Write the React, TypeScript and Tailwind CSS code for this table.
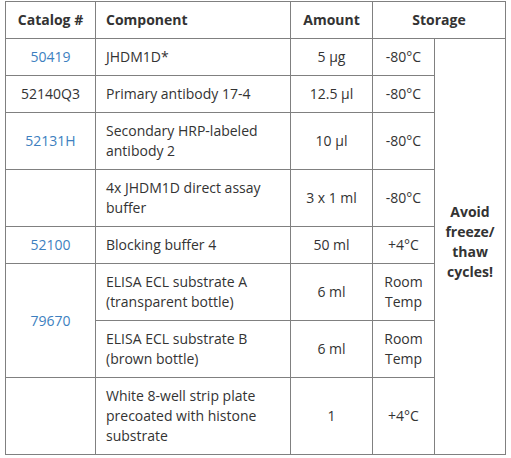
const link = "text-[#3d7fc0]";

type Row = {
  catalog?: string;
  isLink?: boolean;
  catalogSpan?: number;
  skipCatalog?: boolean;
  component: string;
  amount: string;
  storage: string;
};

const rows: Row[] = [
  { catalog: "50419", isLink: true, component: "JHDM1D*", amount: "5 µg", storage: "-80°C" },
  { catalog: "52140Q3", component: "Primary antibody 17-4", amount: "12.5 µl", storage: "-80°C" },
  { catalog: "52131H", isLink: true, component: "Secondary HRP-labeled antibody 2", amount: "10 µl", storage: "-80°C" },
  { catalog: "", component: "4x JHDM1D direct assay buffer", amount: "3 x 1 ml", storage: "-80°C" },
  { catalog: "52100", isLink: true, component: "Blocking buffer 4", amount: "50 ml", storage: "+4°C" },
  { catalog: "79670", isLink: true, catalogSpan: 2, component: "ELISA ECL substrate A (transparent bottle)", amount: "6 ml", storage: "Room Temp" },
  { skipCatalog: true, component: "ELISA ECL substrate B (brown bottle)", amount: "6 ml", storage: "Room Temp" },
  { catalog: "", component: "White 8-well strip plate precoated with histone substrate", amount: "1", storage: "+4°C" },
];

const cell = "border border-[#808080] px-[10px] py-2 align-middle";

export default function App() {
  return (
    <div
      className="bg-white w-[511px] h-[458px] pt-[1px] pl-[5px] text-[14px] leading-5 text-[#333333]"
      style={{ fontFamily: '"Open Sans", sans-serif' }}
    >
      <table className="border-collapse table-fixed w-[500px]">
        <colgroup>
          <col className="w-[90px]" />
          <col className="w-[195px]" />
          <col className="w-[82px]" />
          <col className="w-[62px]" />
          <col className="w-[71px]" />
        </colgroup>
        <thead>
          <tr className="font-bold">
            <th className={`${cell} text-center`}>Catalog #</th>
            <th className={`${cell} text-left`}>Component</th>
            <th className={`${cell} text-center`}>Amount</th>
            <th className={`${cell} text-center`} colSpan={2}>
              Storage
            </th>
          </tr>
        </thead>
        <tbody>
          {rows.map((r, i) => (
            <tr key={i}>
              {!r.skipCatalog && (
                <td
                  className={`${cell} text-center ${r.isLink ? link : ""}`}
                  rowSpan={r.catalogSpan ?? 1}
                >
                  {r.catalog}
                </td>
              )}
              <td className={`${cell} text-left`}>{r.component}</td>
              <td className={`${cell} text-center`}>{r.amount}</td>
              <td className={`${cell} text-center`}>{r.storage}</td>
              {i === 0 && (
                <td
                  className="border border-[#808080] px-2 pt-2 pb-[18px] align-middle text-center font-bold"
                  rowSpan={8}
                >
                  Avoid freeze/ thaw cycles!
                </td>
              )}
            </tr>
          ))}
        </tbody>
      </table>
    </div>
  );
}
